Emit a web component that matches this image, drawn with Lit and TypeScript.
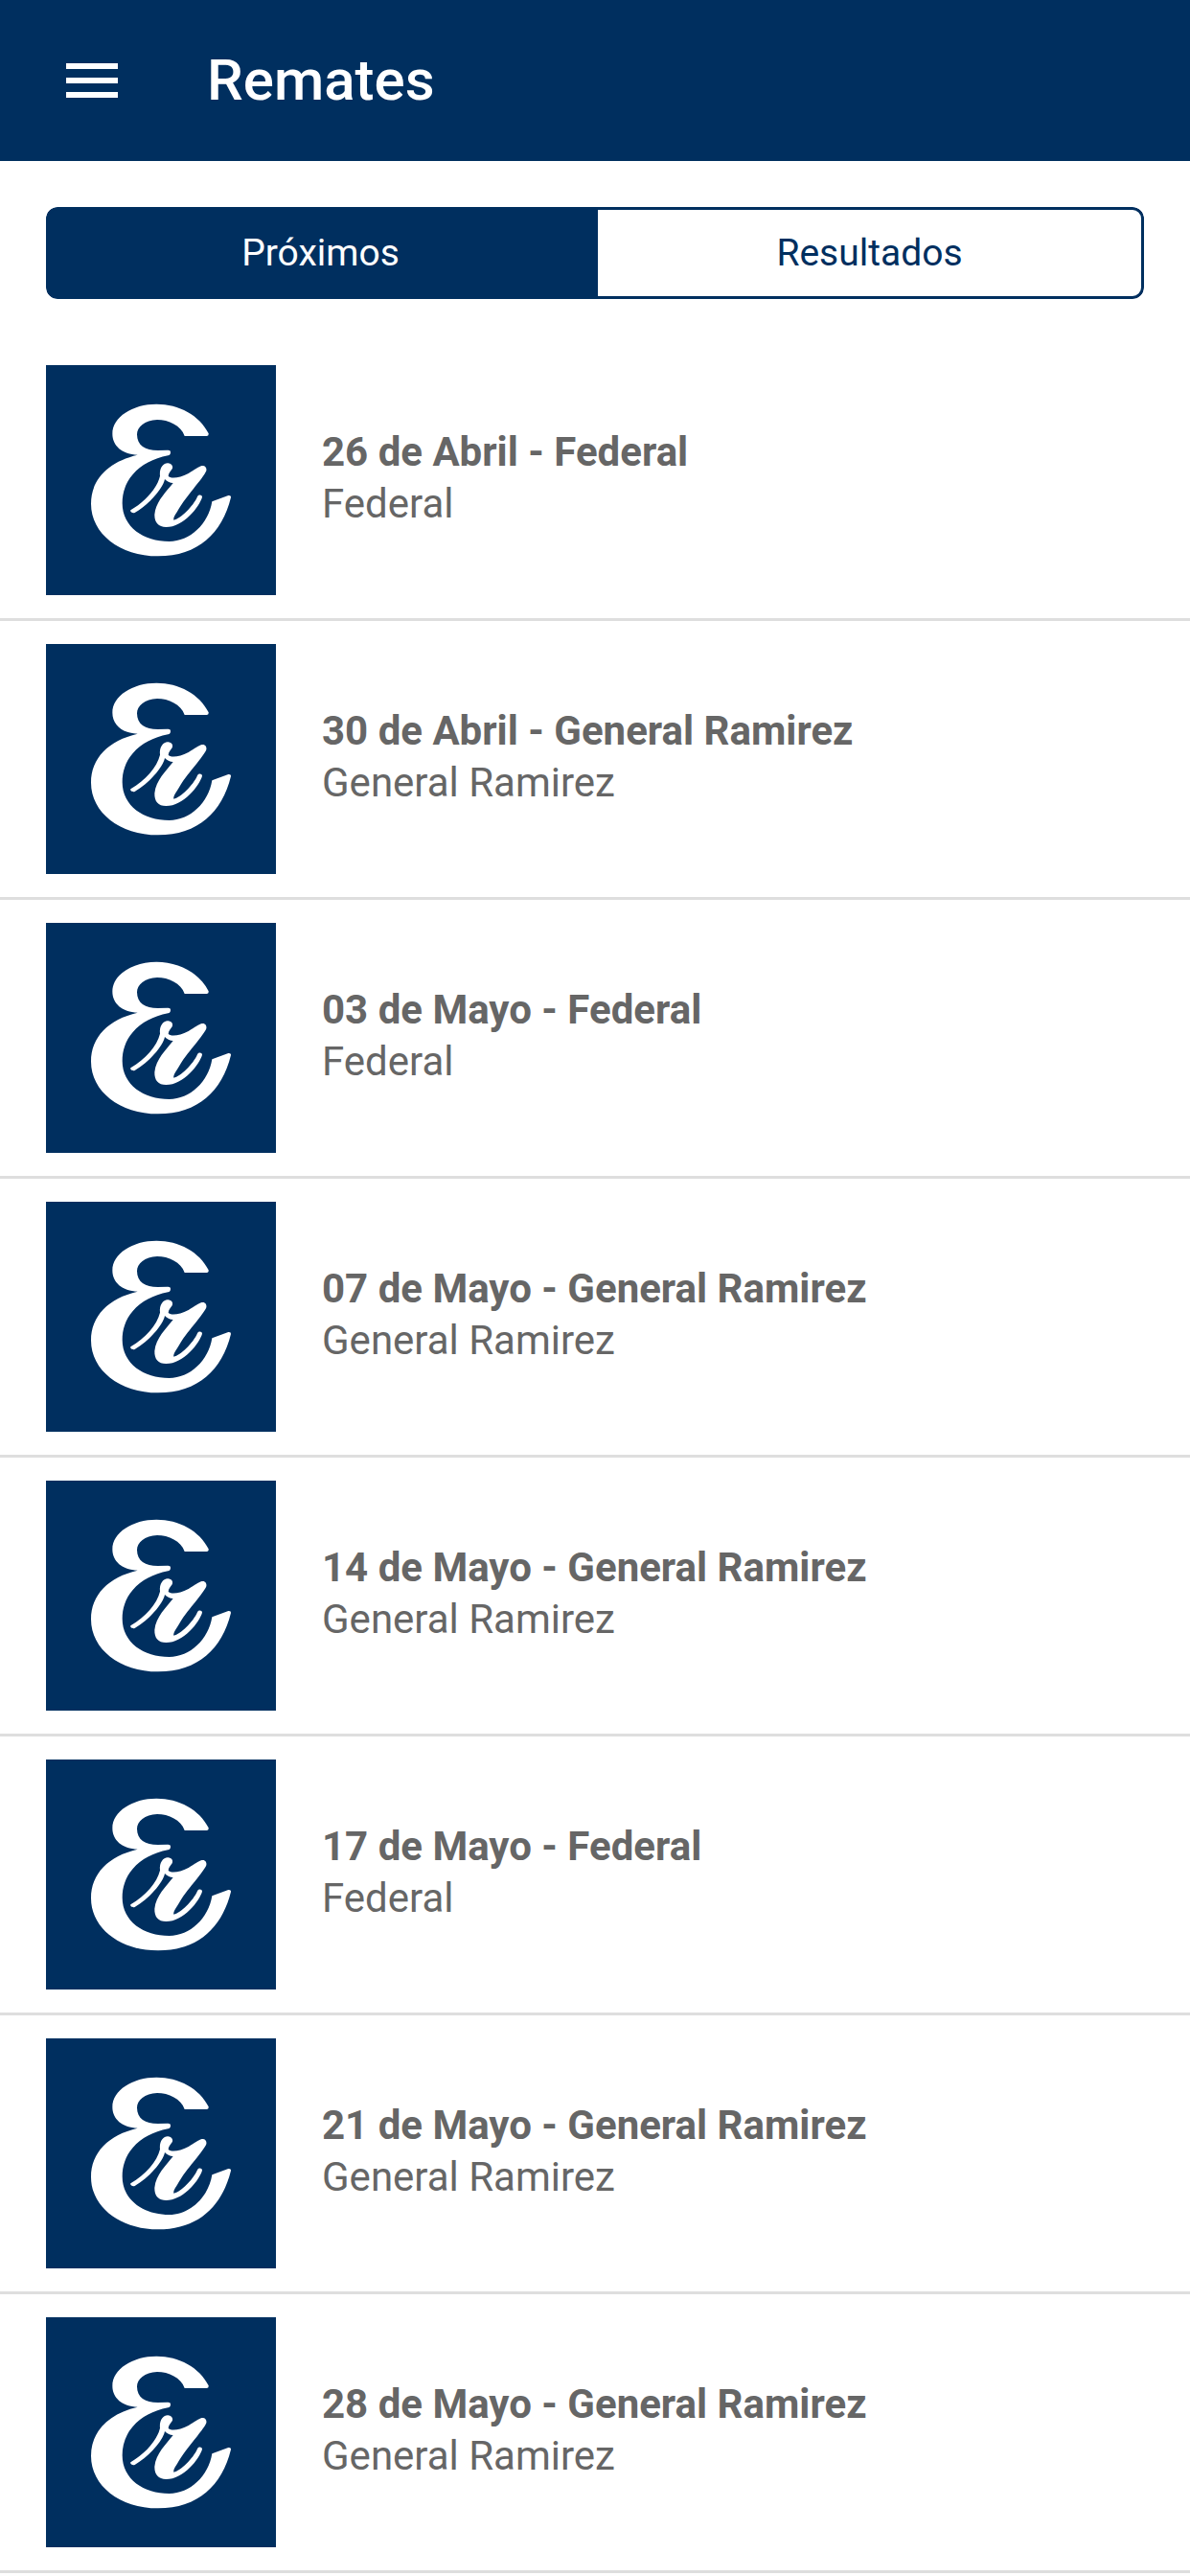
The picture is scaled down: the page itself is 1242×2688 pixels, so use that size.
import { LitElement, html, css } from "lit";
import { customElement, property, state } from "lit/decorators.js";
import { classMap } from "lit/directives/class-map.js";

interface Auction {
  date: string;
  place: string;
}

const AUCTIONS: Auction[] = [
  { date: "26 de Abril", place: "Federal" },
  { date: "30 de Abril", place: "General Ramirez" },
  { date: "03 de Mayo", place: "Federal" },
  { date: "07 de Mayo", place: "General Ramirez" },
  { date: "14 de Mayo", place: "General Ramirez" },
  { date: "17 de Mayo", place: "Federal" },
  { date: "21 de Mayo", place: "General Ramirez" },
  { date: "28 de Mayo", place: "General Ramirez" },
];

const TABS = ["Próximos", "Resultados"];

@customElement("brand-logo")
class BrandLogo extends LitElement {
  static styles = css`
    :host {
      display: block;
      flex: none;
      width: 240px;
      height: 240px;
      background: #002f5f;
    }
    .mark {
      display: block;
      width: 100%;
      height: 100%;
      fill: #fff;
    }
  `;

  render() {
    return html`
      <svg class="mark" viewBox="24 33 720 720" aria-hidden="true">
        <path
          d="M533 247Q534 255 527 255L458 255C447 222 408 204 372 204C333 205 309 227 309 250C309 285 335 300 374 300L406 299Q414 299 414 306Q414 315 406 316C360 325 322 345 296 375C272 402 263 435 263 465C263 540 330 585 410 585C475 585 533 530 544 460L595 441Q604 440 603 447C575 560 500 631 375 631C255 631 165 560 165 467C165 390 220 335 311 314C262 312 232 285 232 248C232 195 295 155 370 155C440 155 505 190 533 247Z"
        />
        <path
          d="M289 487C335 460 372 418 381 380C378 355 392 339 406 340C418 341 423 350 419 358C414 366 408 370 407 380C412 388 440 388 470 372C490 360 500 352 512 348C522 346 528 354 526 364C518 385 470 435 445 475C430 500 422 510 424 518C445 515 485 475 498 445C501 437 513 439 513 446C505 475 455 540 400 540C375 540 363 525 364 500C368 460 400 430 422 402C412 402 402 396 396 390C390 420 345 470 302 495C295 498 286 492 289 487Z"
        />
      </svg>
    `;
  }
}

@customElement("auction-row")
class AuctionRow extends LitElement {
  @property() date = "";
  @property() place = "";

  static styles = css`
    :host {
      display: block;
    }
    .row {
      display: flex;
      align-items: center;
      gap: 48px;
      padding: 24px 48px;
      border-bottom: 3px solid #dedede;
      color: #666;
      text-decoration: none;
    }
    .text {
      flex: 1;
      min-width: 0;
      padding-bottom: 4px;
      font-size: 42px;
      line-height: 54px;
    }
    .title,
    .place {
      margin: 0;
      font-size: inherit;
    }
    .title {
      font-weight: 700;
    }
  `;

  render() {
    return html`
      <a class="row" href="#">
        <brand-logo></brand-logo>
        <div class="text">
          <h2 class="title">${this.date} - ${this.place}</h2>
          <p class="place">${this.place}</p>
        </div>
      </a>
    `;
  }
}

@customElement("app-root")
class AppRoot extends LitElement {
  @state() private selected = 0;

  static styles = css`
    :host {
      display: block;
      min-height: 100vh;
      background: #fff;
      font-family: Roboto, "Liberation Sans", sans-serif;
    }
    .bar {
      display: flex;
      align-items: center;
      gap: 72px;
      height: 168px;
      padding: 0 48px;
      background: #002f5f;
      color: #fff;
    }
    .menu {
      display: flex;
      align-items: center;
      justify-content: center;
      width: 96px;
      height: 96px;
      padding: 0;
      border: 0;
      background: none;
      color: inherit;
    }
    .menu-icon {
      width: 54px;
      height: 36px;
      fill: currentColor;
    }
    .heading {
      margin: 0;
      font-size: 60px;
      font-weight: 500;
      line-height: 72px;
    }
    .segment {
      display: flex;
      margin: 48px 48px 45px;
      border-radius: 12px;
      overflow: hidden;
    }
    .tab {
      flex: 1 1 0;
      height: 96px;
      padding: 0;
      border: 3px solid #002f5f;
      background: #fff;
      color: #002f5f;
      font-family: inherit;
      font-size: 39px;
      line-height: 48px;
    }
    .tab:first-child {
      border-radius: 12px 0 0 12px;
    }
    .tab:last-child {
      border-radius: 0 12px 12px 0;
    }
    .tab.active {
      background: #002f5f;
      color: #fff;
    }
    .list {
      margin: 0;
      padding: 0;
      list-style: none;
    }
  `;

  render() {
    return html`
      <header class="bar">
        <button class="menu" type="button" aria-label="Menú">
          <svg class="menu-icon" viewBox="0 0 54 36" aria-hidden="true">
            <path d="M0 0h54v6H0zM0 15h54v6H0zM0 30h54v6H0z" />
          </svg>
        </button>
        <h1 class="heading">Remates</h1>
      </header>
      <main>
        <div class="segment" role="tablist">
          ${TABS.map(
            (label, i) => html`
              <button
                type="button"
                role="tab"
                class=${classMap({ tab: true, active: i === this.selected })}
                aria-selected=${i === this.selected}
                @click=${() => (this.selected = i)}
              >
                ${label}
              </button>
            `,
          )}
        </div>
        <ul class="list">
          ${AUCTIONS.map(
            (a) => html`
              <li><auction-row .date=${a.date} .place=${a.place}></auction-row></li>
            `,
          )}
        </ul>
      </main>
    `;
  }
}
